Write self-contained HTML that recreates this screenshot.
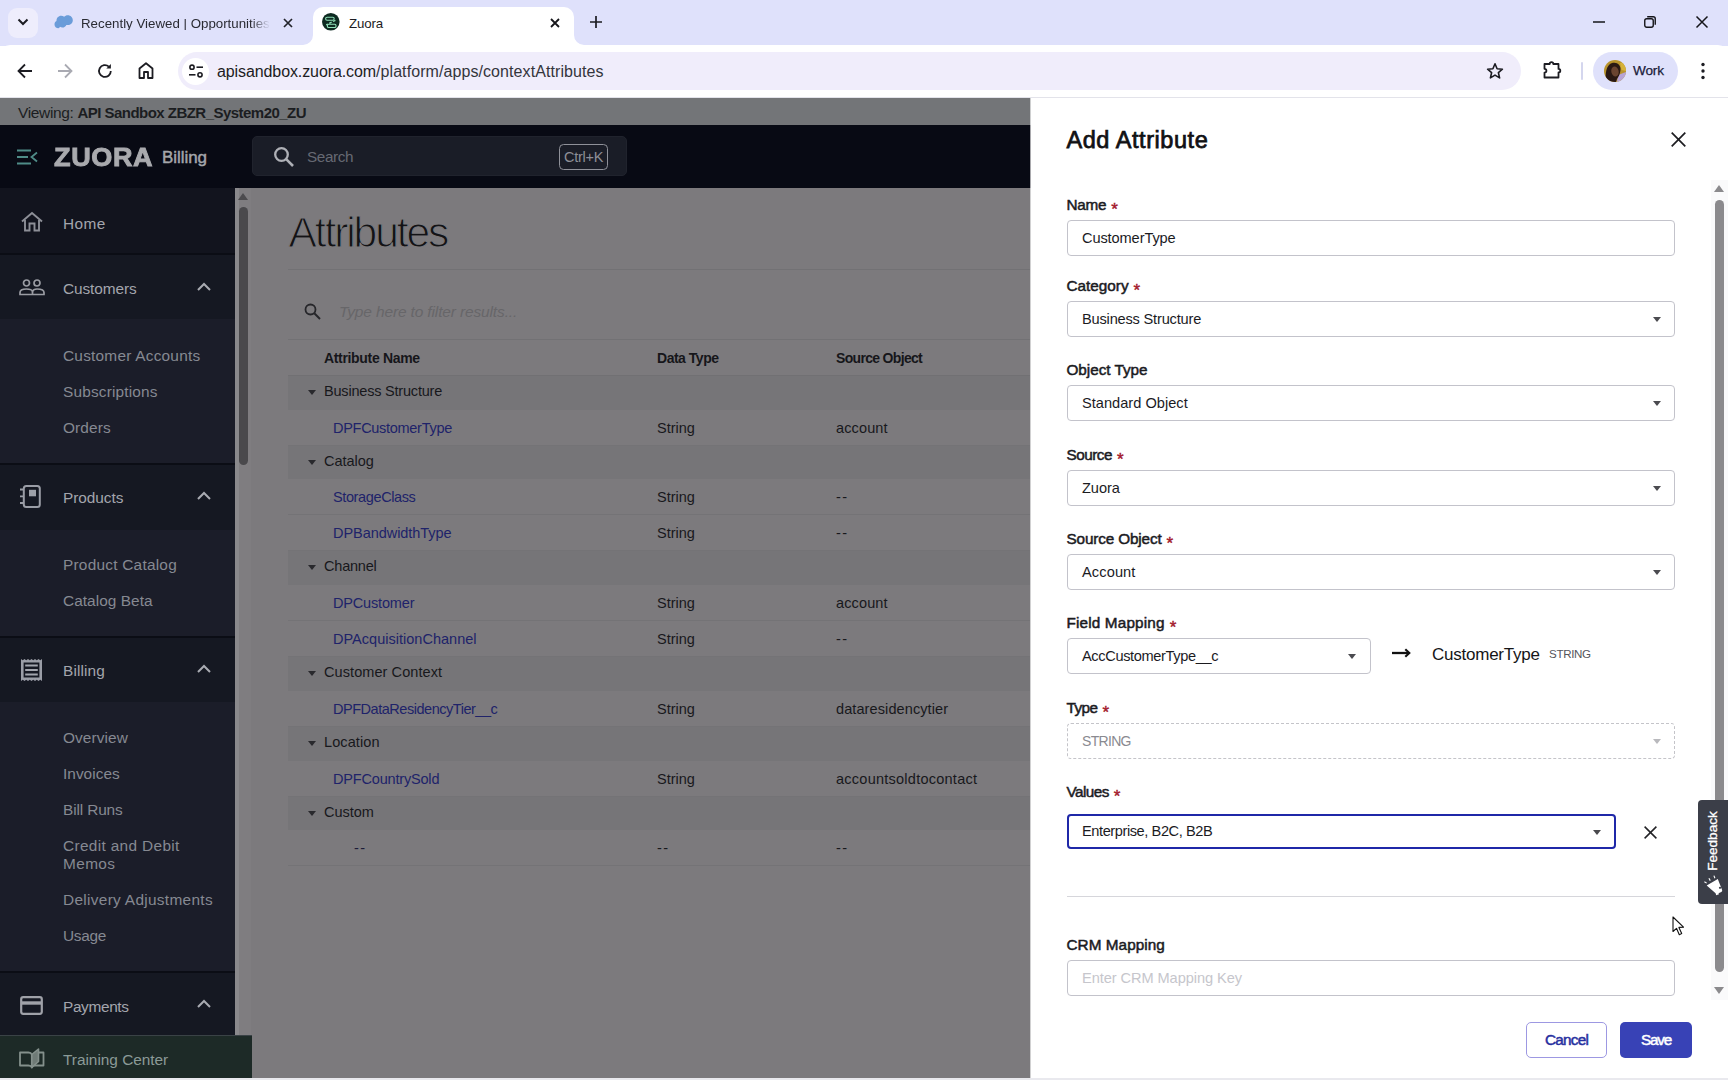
<!DOCTYPE html>
<html lang="en"><head>
<meta charset="utf-8">
<title>Zuora</title>
<style>
*{box-sizing:border-box;margin:0;padding:0}
html,body{width:1728px;height:1080px;overflow:hidden;background:#fff;font-family:"Liberation Sans",sans-serif;color:#111}
.abs{position:absolute}
#root{position:relative;width:1728px;height:1080px;overflow:hidden}
/* ---------- browser chrome ---------- */
#tabstrip{left:0;top:0;width:1728px;height:46px;background:#dfe1fb}
#toolbar{left:0;top:45px;width:1728px;height:53px;background:#fff;border-bottom:1px solid #e3e3ea;border-radius:10px 10px 0 0}
.t{position:absolute;white-space:nowrap;line-height:1}
svg{position:absolute;overflow:visible}
/* ---------- app ---------- */
#viewing{left:0;top:98px;width:1030px;height:27px;background:#737578}
#hdr{left:0;top:125px;width:1030px;height:63px;background:#080a14}
#side{left:0;top:188px;width:235px;height:892px;background:#1b1d29}
#main{left:235px;top:188px;width:795px;height:892px;background:#7c7a7d}
.sh{position:absolute;left:0;width:235px;background:#0e101a}
.si{position:absolute;left:63px;color:#868992;font-size:15.4px;line-height:18px;white-space:nowrap}
.sl{position:absolute;left:63px;color:#a3a5ad;font-size:15.4px;line-height:18px;white-space:nowrap}
.th{top:349px;font-size:14px;font-weight:700;color:#16161a;line-height:18px;letter-spacing:-0.2px}
.td{font-size:14.5px;color:#18181c;line-height:20px}
.rl{left:288px;width:742px;height:1px;background:#747376}
.lnk{color:#20236a}
.grp{left:288px;width:742px;background:#767578}
/* ---------- drawer ---------- */
#drawer{left:1030px;top:98px;width:698px;height:982px;background:#fff}
.lbl{position:absolute;left:1066.5px;font-size:15.3px;font-weight:400;-webkit-text-stroke:0.5px #1b1b1f;color:#1b1b1f;line-height:18px;white-space:nowrap}
.lbl i{font-style:normal;color:#a3182c;font-weight:400;-webkit-text-stroke:0.4px #a3182c;margin-left:5px;font-size:17px;position:relative;top:4.5px;letter-spacing:0}
.inp{position:absolute;left:1066.5px;width:608px;height:36px;border:1px solid #c3c3cb;border-radius:4px;background:#fff;font-size:14.6px;color:#1b1b1f;line-height:35px;padding-left:14.5px;white-space:nowrap}
.car{position:absolute;width:0;height:0;border-left:4.5px solid transparent;border-right:4.5px solid transparent;border-top:5px solid #4b4b50}
</style>
</head>
<body>
<div id="root">
<div id="tabstrip" class="abs"></div>
<div class="abs" style="left:8px;top:8px;width:30px;height:30px;border-radius:9px;background:#eeedfc"></div>
<svg style="left:16px;top:17px" width="14" height="10" viewBox="0 0 14 10"><path d="M2.5 2.5 L7 7 L11.5 2.5" fill="none" stroke="#1c1c22" stroke-width="2"></path></svg>
<!-- inactive tab -->
<svg style="left:54px;top:14px" width="20" height="16" viewBox="0 0 20 16"><path d="M4.5 14.2c-2.3 0-4-1.7-4-3.8 0-1.500.8-2.700 2-3.300C2.300 4.200 4.400 1.800 7.200 1.800c1.100 0 2.100.4 2.900 1C11 1.900 12.300 1.300 13.800 1.300c2.800 0 5 2.200 5 4.900 0 2.700-2.200 4.900-5 4.900-.5 0-1-.1-1.400-.2-.7 1.500-2.200 2.600-4 2.600-.9 0-1.700-.3-2.400-.700-.4.900-.9 1.400-1.500 1.400z" fill="#6a9cd9"></path></svg>
<div class="t" style="left:81px;top:17px;font-size:13.3px;color:#2a2b33;width:189px;overflow:hidden;-webkit-mask-image:linear-gradient(90deg,#000 170px,transparent 189px);mask-image:linear-gradient(90deg,#000 170px,transparent 189px)">Recently Viewed | Opportunities</div>
<svg style="left:283px;top:18px" width="10" height="10" viewBox="0 0 10 10"><path d="M1 1L9 9M9 1L1 9" stroke="#22232a" stroke-width="1.700" fill="none"></path></svg>
<!-- active tab -->
<div class="abs" style="left:313px;top:7px;width:261px;height:40px;background:#fff;border-radius:10px 10px 0 0"></div>
<svg style="left:303px;top:35px" width="10" height="10" viewBox="0 0 10 10"><path d="M10 0V10H0A10 10 0 0 0 10 0Z" fill="#fff"></path></svg>
<svg style="left:574px;top:35px" width="10" height="10" viewBox="0 0 10 10"><path d="M0 0V10H10A10 10 0 0 1 0 0Z" fill="#fff"></path></svg>
<svg style="left:322px;top:13px" width="17.600" height="17.600" viewBox="0 0 17.600 17.600"><circle cx="8.800" cy="8.800" r="8.800" fill="#0d2a21"></circle><rect x="3.600" y="4.200" width="8.600" height="3" rx="1.500" fill="none" stroke="#8fe0b8" stroke-width="1.100"></rect><rect x="5.400" y="11.300" width="8.600" height="3.200" rx="1.300" fill="none" stroke="#8fe0b8" stroke-width="1.100"></rect><path d="M13.400 7.400L4.200 11.800" stroke="#8fe0b8" stroke-width="1.300" stroke-dasharray="2.600 1.600"></path></svg>
<div class="t" style="left: 349px; top: 17px; font-size: 13.3px; color: rgb(28, 28, 34); letter-spacing: -0.16px;">Zuora</div>
<svg style="left:550px;top:18px" width="10" height="10" viewBox="0 0 10 10"><path d="M1 1L9 9M9 1L1 9" stroke="#15151a" stroke-width="1.800" fill="none"></path></svg>
<svg style="left:590px;top:16px" width="12" height="12" viewBox="0 0 12 12"><path d="M6 0V12M0 6H12" stroke="#1c1c22" stroke-width="1.700"></path></svg>
<!-- window controls -->
<svg style="left:1593px;top:21px" width="12" height="2" viewBox="0 0 12 2"><path d="M0 1H12" stroke="#15151a" stroke-width="1.500"></path></svg>
<svg style="left:1644px;top:16px" width="12" height="12" viewBox="0 0 12 12"><rect x=".75" y="2.750" width="8.500" height="8.500" rx="2" fill="none" stroke="#15151a" stroke-width="1.400"></rect><path d="M3.200 .75H9.200Q11.250 .75 11.250 2.800V8.800" fill="none" stroke="#15151a" stroke-width="1.400"></path></svg>
<svg style="left:1696px;top:16px" width="12" height="12" viewBox="0 0 12 12"><path d="M.5 .5L11.500 11.500M11.500 .5L.5 11.500" stroke="#15151a" stroke-width="1.500"></path></svg>
<!-- toolbar -->
<div id="toolbar" class="abs"></div>
<svg style="left:17px;top:63px" width="16" height="16" viewBox="0 0 16 16"><path d="M15 8H2M8 1.500L1.500 8L8 14.500" fill="none" stroke="#1c1c22" stroke-width="1.800"></path></svg>
<svg style="left:57px;top:63px" width="16" height="16" viewBox="0 0 16 16"><path d="M1 8H14M8 1.500L14.500 8L8 14.500" fill="none" stroke="#a9aab2" stroke-width="1.800"></path></svg>
<svg style="left:97px;top:63px" width="16" height="16" viewBox="0 0 16 16"><path d="M13.800 8A5.900 5.900 0 1 1 11.900 3.700" fill="none" stroke="#1c1c22" stroke-width="1.800"></path><path d="M13.900 1V5.600H9.300Z" fill="#1c1c22"></path></svg>
<svg style="left:138px;top:62px" width="16" height="17" viewBox="0 0 16 17"><path d="M1.500 16V6.500L8 1.300L14.500 6.500V16H10V10H6V16Z" fill="none" stroke="#1c1c22" stroke-width="1.800" stroke-linejoin="round"></path></svg>
<div class="abs" style="left:178px;top:52px;width:1343px;height:38px;border-radius:19px;background:#f0edfb"></div>
<div class="abs" style="left:181.500px;top:57.500px;width:27px;height:27px;border-radius:14px;background:#fff"></div>
<svg style="left:188px;top:64px" width="16" height="14" viewBox="0 0 16 14"><circle cx="4" cy="3.200" r="2.100" fill="none" stroke="#1c1c22" stroke-width="1.600"></circle><path d="M8.500 3.200H15" stroke="#1c1c22" stroke-width="1.600"></path><circle cx="12" cy="10.800" r="2.100" fill="none" stroke="#1c1c22" stroke-width="1.600"></circle><path d="M1 10.800H7.500" stroke="#1c1c22" stroke-width="1.600"></path></svg>
<div class="t" style="left:217px;top:62.5px;font-size:16px;color:#1c1c22;line-height:18px"><span style="letter-spacing: -0.1px;">apisandbox.zuora.com</span><span style="color: rgb(52, 53, 60); letter-spacing: 0.08px;">/platform/apps/contextAttributes</span></div>
<svg style="left:1486px;top:62px" width="18" height="18" viewBox="0 0 18 18"><path d="M9 1.800L11.100 6.700L16.400 7.200L12.400 10.700L13.600 15.900L9 13.100L4.400 15.900L5.600 10.700L1.600 7.200L6.900 6.700Z" fill="none" stroke="#1c1c22" stroke-width="1.600" stroke-linejoin="round"></path></svg>
<svg style="left:1543px;top:60px" width="20" height="20" viewBox="0 0 20 20"><path d="M1.500 4H6.700A1.800 1.800 0 0 1 10.300 4H15.500V8.900A1.800 1.800 0 0 1 15.500 12.500V17.500H1.500V12.600A1.900 1.900 0 0 0 1.500 8.800Z" fill="none" stroke="#1c1c22" stroke-width="1.800" stroke-linejoin="round"></path></svg>
<div class="abs" style="left:1581px;top:62px;width:2px;height:18px;background:#d4d6ee;border-radius:1px"></div>
<div class="abs" style="left:1593px;top:52px;width:85px;height:38px;border-radius:19px;background:#dfe1fb"></div>
<svg style="left:1604px;top:60px" width="22" height="22" viewBox="0 0 22 22"><clipPath id="av"><circle cx="11" cy="11" r="11"></circle></clipPath><g clip-path="url(#av)"><rect width="22" height="22" fill="#b8932c"></rect><path d="M13 22L14 15L22 12V22Z" fill="#b7a4d6"></path><path d="M2 22C1 14 2 5 8 3C13 1.500 17 5 16.500 10C16.200 14 14.500 17 13 19L12 22Z" fill="#2a1913"></path><ellipse cx="11" cy="11.500" rx="3.700" ry="5" fill="#6a4430" transform="rotate(-12 11 11.500)"></ellipse><path d="M16 3L22 2V11L17.500 10Z" fill="#d6b23a"></path></g></svg>
<div class="t" style="left: 1633px; top: 63px; font-size: 13.6px; color: rgb(26, 27, 58); -webkit-text-stroke: 0.25px rgb(26, 27, 58); line-height: 16px; letter-spacing: -0.16px;">Work</div>
<svg style="left:1701px;top:62px" width="4" height="18" viewBox="0 0 4 18"><circle cx="2" cy="2.500" r="1.700" fill="#1c1c22"></circle><circle cx="2" cy="9" r="1.700" fill="#1c1c22"></circle><circle cx="2" cy="15.500" r="1.700" fill="#1c1c22"></circle></svg>
<div id="viewing" class="abs"></div>
<div class="t" style="left:18px;top:104px;font-size:15.5px;color:#1b1d21;line-height:18px;"><span style="letter-spacing: -0.35px;">Viewing: </span><b style="font-size: 15px; letter-spacing: -0.53px;">API Sandbox ZBZR_System20_ZU</b></div>
<div id="hdr" class="abs"></div>
<svg style="left:17px;top:149px" width="21" height="16" viewBox="0 0 21 16"><path d="M0 1.500H14M0 8H11M0 14.500H14" stroke="#4f8c88" stroke-width="1.800"></path><path d="M20 3.500L14.500 8L20 12.500" fill="none" stroke="#4f8c88" stroke-width="1.800"></path></svg>
<div class="t" id="logo" style="left:54px;top:144px;font-size:25.5px;font-weight:700;color:#a9aaae;line-height:26px;letter-spacing:0.6px;-webkit-text-stroke:0.9px #a9aaae;transform:scaleX(1.06);transform-origin:0 0">ZUORA</div>
<div class="t" style="left: 162px; top: 148px; font-size: 17px; font-weight: 400; color: rgb(164, 166, 171); line-height: 20px; -webkit-text-stroke: 0.45px rgb(164, 166, 171); letter-spacing: -0.06px;">Billing</div>
<div class="abs" style="left:252px;top:136px;width:375px;height:40px;border-radius:5px;background:#1a1d27;border:1px solid #20232d"></div>
<svg style="left:273px;top:146px" width="22" height="22" viewBox="0 0 22 22"><circle cx="8.500" cy="8.500" r="6.300" fill="none" stroke="#aeb0b6" stroke-width="2.300"></circle><path d="M13.200 13.200L20 20" stroke="#aeb0b6" stroke-width="2.600"></path></svg>
<div class="t" style="left: 307px; top: 148px; font-size: 15.3px; color: rgb(102, 105, 115); line-height: 18px; letter-spacing: -0.39px;">Search</div>
<div class="abs" style="left:559px;top:143.5px;width:49px;height:26px;border:1.3px solid #8f9199;border-radius:4.5px"></div>
<div class="t" style="left: 564px; top: 149px; font-size: 14.5px; color: rgb(141, 143, 151); line-height: 16px; letter-spacing: -0.24px;">Ctrl+K</div>
<!-- sidebar -->
<div id="side" class="abs"></div>
<div class="sh" style="top:188px;height:65px;background:#12141e"></div>
<div class="sh" style="top:253px;height:2px;background:#0b0d15"></div>
<div class="sh" style="top:255px;height:64px;background:#151822"></div>
<div class="sh" style="top:463px;height:2px;background:#0b0d15"></div>
<div class="sh" style="top:465px;height:65px;background:#151822"></div>
<div class="sh" style="top:636px;height:2px;background:#0b0d15"></div>
<div class="sh" style="top:638px;height:64px;background:#151822"></div>
<div class="sh" style="top:971px;height:2px;background:#0b0d15"></div>
<div class="sh" style="top:973px;height:107px;background:#151822"></div>
<!-- icons -->
<svg style="left:21px;top:212px" width="22" height="20" viewBox="0 0 22 20"><path d="M1 9.500L11 1L21 9.500" fill="none" stroke="#8d8f97" stroke-width="1.900"></path><path d="M4 8V18.500H8.500V11.500H13.500V18.500H18V8" fill="none" stroke="#8d8f97" stroke-width="1.900"></path></svg>
<svg style="left:19px;top:279px" width="26" height="17" viewBox="0 0 26 17"><circle cx="7.500" cy="4" r="3" fill="none" stroke="#9a9ca3" stroke-width="1.700"></circle><circle cx="18" cy="4" r="3" fill="none" stroke="#9a9ca3" stroke-width="1.700"></circle><path d="M1 15.500V13.500C1 11 4.500 10 7.500 10S13 11 13.500 12.500C14 11 16 10 18 10C21 10 25 11 25 13.500V15.500Z" fill="none" stroke="#9a9ca3" stroke-width="1.700"></path><path d="M13.500 12.500V15.500" stroke="#9a9ca3" stroke-width="1.700"></path></svg>
<svg style="left:20px;top:484px" width="22" height="25" viewBox="0 0 22 25"><rect x="3.800" y="2" width="16" height="21" rx="2.500" fill="none" stroke="#9a9da6" stroke-width="2"></rect><rect x="9" y="5.800" width="7" height="6.500" fill="#9da0a8"></rect><path d="M0 5.500H3.500M0 12.300H3.500M0 19H3.500" stroke="#9a9da6" stroke-width="1.800"></path></svg>
<svg style="left:21px;top:659px" width="21" height="22" viewBox="0 0 21 22"><path fill-rule="evenodd" d="M0 0L1.750 1.200L3.500 0L5.250 1.200L7 0L8.750 1.200L10.500 0L12.250 1.200L14 0L15.750 1.200L17.500 0L19.250 1.200L21 0V22L19.250 20.800L17.500 22L15.750 20.800L14 22L12.250 20.800L10.500 22L8.750 20.800L7 22L5.250 20.800L3.500 22L1.750 20.800L0 22ZM2.600 3.600V18.400H18.400V3.600Z" fill="#9a9da6"></path><path d="M4.200 6.400H16.800M4.200 11H16.800M4.200 15.600H16.800" stroke="#a2a5ad" stroke-width="2"></path></svg>
<svg style="left:20px;top:996px" width="23" height="19" viewBox="0 0 23 19"><rect x="1.200" y="1.200" width="20.600" height="16.600" rx="2" fill="none" stroke="#9fa1a8" stroke-width="2.200"></rect><path d="M1 7H22" stroke="#9fa1a8" stroke-width="3.400"></path></svg>
<!-- chevrons -->
<svg style="left:197px;top:282px" width="14" height="9" viewBox="0 0 14 9"><path d="M1 8L7 2L13 8" fill="none" stroke="#a9abb2" stroke-width="2"></path></svg>
<svg style="left:197px;top:491px" width="14" height="9" viewBox="0 0 14 9"><path d="M1 8L7 2L13 8" fill="none" stroke="#a9abb2" stroke-width="2"></path></svg>
<svg style="left:197px;top:664px" width="14" height="9" viewBox="0 0 14 9"><path d="M1 8L7 2L13 8" fill="none" stroke="#a9abb2" stroke-width="2"></path></svg>
<svg style="left:197px;top:999px" width="14" height="9" viewBox="0 0 14 9"><path d="M1 8L7 2L13 8" fill="none" stroke="#a9abb2" stroke-width="2"></path></svg>
<!-- labels -->
<div class="sl" style="top: 215px; letter-spacing: 0.38px;">Home</div>
<div class="sl" style="top: 280px; letter-spacing: -0.09px;">Customers</div>
<div class="si" style="top: 347px; letter-spacing: 0.23px;">Customer Accounts</div>
<div class="si" style="top: 383px; letter-spacing: 0.18px;">Subscriptions</div>
<div class="si" style="top: 419px; letter-spacing: 0.13px;">Orders</div>
<div class="sl" style="top: 489px; letter-spacing: -0.04px;">Products</div>
<div class="si" style="top: 556px; letter-spacing: 0.24px;">Product Catalog</div>
<div class="si" style="top: 592px; letter-spacing: 0.05px;">Catalog Beta</div>
<div class="sl" style="top: 662px; letter-spacing: 0.12px;">Billing</div>
<div class="si" style="top: 729px; letter-spacing: 0.09px;">Overview</div>
<div class="si" style="top: 765px; letter-spacing: 0.03px;">Invoices</div>
<div class="si" style="top: 801px; letter-spacing: -0.13px;">Bill Runs</div>
<div class="si" style="top:837px"><span style="letter-spacing: 0.34px;">Credit and Debit</span><br><span style="letter-spacing: 0.38px;">Memos</span></div>
<div class="si" style="top: 891px; letter-spacing: 0.31px;">Delivery Adjustments</div>
<div class="si" style="top: 927px; letter-spacing: -0.28px;">Usage</div>
<div class="sl" style="top: 998px; letter-spacing: -0.35px;">Payments</div>
<!-- main -->
<div id="main" class="abs"></div>
<div class="abs" style="left:235px;top:188px;width:4px;height:892px;background:#8a898c"></div><div class="abs" style="left:239px;top:188px;width:12px;height:892px;background:#7f7d80"></div>
<svg style="left:238px;top:192px" width="10" height="8" viewBox="0 0 10 8"><path d="M0 8L5 1L10 8Z" fill="#4c4b4e"></path></svg>
<div class="abs" style="left:239px;top:207px;width:9px;height:258px;border-radius:4.500px;background:#4a494c"></div>
<div class="t" style="left: 288.5px; top: 208px; font-size: 42.5px; color: rgb(19, 19, 22); line-height: 50px; font-weight: 400; -webkit-text-stroke: 1.1px rgb(124, 122, 125); letter-spacing: -2.09px;" id="ttl">Attributes</div>
<div class="abs" style="left:288px;top:269px;width:742px;height:1px;background:#727174"></div>
<svg style="left:304px;top:303px" width="17" height="17" viewBox="0 0 17 17"><circle cx="6.500" cy="6.500" r="5" fill="none" stroke="#26262a" stroke-width="1.800"></circle><path d="M10.300 10.300L16 16" stroke="#26262a" stroke-width="2"></path></svg>
<div class="t" style="left: 339px; top: 303px; font-size: 15.5px; font-style: italic; color: rgb(103, 102, 105); line-height: 18px; letter-spacing: -0.14px;">Type here to filter results...</div>
<div class="abs" style="left:288px;top:339px;width:742px;height:1px;background:#727174"></div>
<div class="t th" style="left: 324px; letter-spacing: -0.33px;">Attribute Name</div>
<div class="t th" style="left: 657px; letter-spacing: -0.48px;">Data Type</div>
<div class="t th" style="left: 836px; letter-spacing: -0.68px;">Source Object</div>
<div class="abs" style="left:288px;top:375px;width:742px;height:1px;background:#717073"></div>
<div class="abs grp" style="top:376px;height:34px"></div>
<div class="car" style="left:308px;top:390px;border-top-color:#29292d"></div>
<div class="t td" style="left: 324px; top: 381px; letter-spacing: -0.2px;">Business Structure</div>
<div class="t td lnk" style="left: 333px; top: 418px; letter-spacing: -0.29px;">DPFCustomerType</div>
<div class="t td" style="left: 657px; top: 418px; letter-spacing: 0px;">String</div>
<div class="t td" style="left: 836px; top: 418px; letter-spacing: 0.13px;">account</div>
<div class="abs rl" style="top:445px"></div>
<div class="abs grp" style="top:446px;height:33px"></div>
<div class="car" style="left:308px;top:460px;border-top-color:#29292d"></div>
<div class="t td" style="left: 324px; top: 451px; letter-spacing: -0.03px;">Catalog</div>
<div class="t td lnk" style="left: 333px; top: 487px; letter-spacing: -0.38px;">StorageClass</div>
<div class="t td" style="left: 657px; top: 487px; letter-spacing: 0px;">String</div>
<div class="t td" style="left: 836px; top: 487px; letter-spacing: 1.53px;">--</div>
<div class="abs rl" style="top:514px"></div>
<div class="t td lnk" style="left: 333px; top: 523px; letter-spacing: -0.05px;">DPBandwidthType</div>
<div class="t td" style="left: 657px; top: 523px; letter-spacing: 0px;">String</div>
<div class="t td" style="left: 836px; top: 523px; letter-spacing: 1.53px;">--</div>
<div class="abs rl" style="top:550px"></div>
<div class="abs grp" style="top:551px;height:34px"></div>
<div class="car" style="left:308px;top:565px;border-top-color:#29292d"></div>
<div class="t td" style="left: 324px; top: 556px; letter-spacing: -0.2px;">Channel</div>
<div class="t td lnk" style="left: 333px; top: 593px; letter-spacing: -0.17px;">DPCustomer</div>
<div class="t td" style="left: 657px; top: 593px; letter-spacing: 0px;">String</div>
<div class="t td" style="left: 836px; top: 593px; letter-spacing: 0.13px;">account</div>
<div class="abs rl" style="top:620px"></div>
<div class="t td lnk" style="left: 333px; top: 629px; letter-spacing: 0.02px;">DPAcquisitionChannel</div>
<div class="t td" style="left: 657px; top: 629px; letter-spacing: 0px;">String</div>
<div class="t td" style="left: 836px; top: 629px; letter-spacing: 1.53px;">--</div>
<div class="abs rl" style="top:656px"></div>
<div class="abs grp" style="top:657px;height:34px"></div>
<div class="car" style="left:308px;top:671px;border-top-color:#29292d"></div>
<div class="t td" style="left: 324px; top: 662px; letter-spacing: 0.08px;">Customer Context</div>
<div class="t td lnk" style="left: 333px; top: 699px; letter-spacing: -0.47px;">DPFDataResidencyTier__c</div>
<div class="t td" style="left: 657px; top: 699px; letter-spacing: 0px;">String</div>
<div class="t td" style="left: 836px; top: 699px; letter-spacing: 0.1px;">dataresidencytier</div>
<div class="abs rl" style="top:726px"></div>
<div class="abs grp" style="top:727px;height:34px"></div>
<div class="car" style="left:308px;top:741px;border-top-color:#29292d"></div>
<div class="t td" style="left: 324px; top: 732px; letter-spacing: 0.1px;">Location</div>
<div class="t td lnk" style="left: 333px; top: 769px; letter-spacing: -0.18px;">DPFCountrySold</div>
<div class="t td" style="left: 657px; top: 769px; letter-spacing: 0px;">String</div>
<div class="t td" style="left: 836px; top: 769px; letter-spacing: 0.25px;">accountsoldtocontact</div>
<div class="abs rl" style="top:796px"></div>
<div class="abs grp" style="top:797px;height:33px"></div>
<div class="car" style="left:308px;top:811px;border-top-color:#29292d"></div>
<div class="t td" style="left: 324px; top: 802px; letter-spacing: -0.04px;">Custom</div>
<div class="t td lnk" style="left: 354px; top: 838px; color: rgb(28, 28, 56); letter-spacing: 1.53px;">--</div>
<div class="t td" style="left: 657px; top: 838px; letter-spacing: 1.53px;">--</div>
<div class="t td" style="left: 836px; top: 838px; letter-spacing: 1.53px;">--</div>
<div class="abs rl" style="top:865px"></div>
<div class="abs" style="left:0;top:1035px;width:252px;height:43px;background:#1d2a27;border-top:1px solid #3a4246"></div>
<svg style="left:19px;top:1048px" width="26" height="21" viewBox="0 0 26 21"><path d="M1 4.500H9.500Q12 4.500 12.800 6.500V19.500Q12 17.500 9.500 17.500H1Z" fill="none" stroke="#84908c" stroke-width="1.800" stroke-linejoin="round"></path><path d="M12.800 6.500L19.500 1V13.500L12.800 19.500Z" fill="#6f7b77" stroke="#84908c" stroke-width="1.600" stroke-linejoin="round"></path><path d="M19.500 4.500H24.500V17.500H16Q13.500 17.500 12.800 19.500" fill="none" stroke="#84908c" stroke-width="1.800" stroke-linejoin="round"></path></svg>
<div class="sl" style="top: 1051px; color: rgb(139, 154, 151); letter-spacing: -0.02px;">Training Center</div>

<div id="drawer" class="abs"></div><div class="abs" style="left:1030px;top:98px;width:1px;height:27px;background:rgba(115,117,120,.35)"></div><div class="abs" style="left:1030px;top:125px;width:1px;height:63px;background:rgba(8,10,20,.35)"></div><div class="abs" style="left:1030px;top:188px;width:1px;height:890px;background:rgba(124,122,125,.35)"></div>
<div class="t" id="dttl" style="left: 1066.5px; top: 126px; font-size: 23.5px; font-weight: 400; -webkit-text-stroke: 0.75px rgb(17, 17, 20); color: rgb(17, 17, 20); line-height: 28px; letter-spacing: 0.56px;">Add Attribute</div>
<svg style="left:1671px;top:132px" width="15" height="15" viewBox="0 0 15 15"><path d="M.7 .7L14.300 14.300M14.300 .7L.7 14.300" stroke="#1d1d21" stroke-width="1.700"></path></svg>
<!-- fields -->
<div class="lbl" style="top:196px"><span style="letter-spacing: -0.24px;">Name</span><i>*</i></div>
<div class="inp" style="top: 220px; letter-spacing: -0.11px;">CustomerType</div>
<div class="lbl" style="top:277px"><span style="letter-spacing: 0px;">Category</span><i>*</i></div>
<div class="inp" style="top: 301px; letter-spacing: -0.19px;">Business Structure</div><div class="car" style="left:1652.5px;top:317px"></div>
<div class="lbl" style="top: 361px; letter-spacing: -0.03px;">Object Type</div>
<div class="inp" style="top: 385px; letter-spacing: 0.02px;">Standard Object</div><div class="car" style="left:1652.5px;top:401px"></div>
<div class="lbl" style="top:446px"><span style="letter-spacing: -0.51px;">Source</span><i>*</i></div>
<div class="inp" style="top: 470px; letter-spacing: -0.06px;">Zuora</div><div class="car" style="left:1652.5px;top:486px"></div>
<div class="lbl" style="top:530px"><span style="letter-spacing: -0.14px;">Source Object</span><i>*</i></div>
<div class="inp" style="top: 554px; letter-spacing: 0.11px;">Account</div><div class="car" style="left:1652.5px;top:570px"></div>
<div class="lbl" style="top:614px"><span style="letter-spacing: 0.16px;">Field Mapping</span><i>*</i></div>
<div class="inp" style="top: 638px; width: 304px; letter-spacing: -0.37px;">AccCustomerType__c</div><div class="car" style="left:1347.5px;top:654px"></div>
<svg style="left:1392px;top:647px" width="19" height="12" viewBox="0 0 19 12"><path d="M0 6H16.500" stroke="#111" stroke-width="2.300"></path><path d="M13.300 2.300L17.300 6L13.300 9.700" fill="none" stroke="#111" stroke-width="2.100"></path></svg>
<div class="t" style="left: 1432px; top: 645px; font-size: 17px; color: rgb(21, 21, 24); line-height: 20px; letter-spacing: -0.24px;">CustomerType</div>
<div class="t" style="left: 1549px; top: 647px; font-size: 11.6px; color: rgb(85, 85, 91); line-height: 14px; letter-spacing: -0.34px;">STRING</div>
<div class="lbl" style="top:699px"><span style="letter-spacing: -0.52px;">Type</span><i>*</i></div>
<div class="inp" style="top: 723px; border: 1px dashed rgb(196, 196, 201); color: rgb(138, 138, 144); font-size: 14px; letter-spacing: -0.68px;">STRING</div><div class="car" style="left:1652.5px;top:739px;border-top-color:#b9b9bd"></div>
<div class="lbl" style="top:783px"><span style="letter-spacing: -0.55px;">Values</span><i>*</i></div>
<div class="inp" style="top: 814px; width: 549px; height: 35px; border: 2px solid rgb(31, 40, 168); line-height: 31px; padding-left: 13.5px; letter-spacing: -0.42px;">Enterprise, B2C, B2B</div><div class="car" style="left:1593px;top:830px;border-top-color:#4a4a4e"></div>
<svg style="left:1644px;top:826px" width="13" height="13" viewBox="0 0 13 13"><path d="M.6 .6L12.400 12.400M12.400 .6L.6 12.400" stroke="#222226" stroke-width="1.500"></path></svg>
<div class="abs" style="left:1066.5px;top:896px;width:608px;height:1px;background:#d6d6db"></div>
<div class="lbl" style="top: 936px; letter-spacing: 0.05px;">CRM Mapping</div>
<div class="inp" style="top: 960px; color: rgb(198, 198, 204); letter-spacing: -0.07px;">Enter CRM Mapping Key</div>
<!-- scrollbar -->
<div class="abs" style="left:1711px;top:180px;width:17px;height:820px;background:#fafafb"></div>
<svg style="left:1714px;top:184px" width="10" height="8" viewBox="0 0 10 8"><path d="M0 8L5 1L10 8Z" fill="#8b8a8d"></path></svg>
<div class="abs" style="left:1715px;top:200px;width:9px;height:772px;border-radius:4.500px;background:#8b8a8d"></div>
<svg style="left:1714px;top:987px" width="10" height="8" viewBox="0 0 10 8"><path d="M0 0L5 7L10 0Z" fill="#8b8a8d"></path></svg>
<!-- feedback -->
<div class="abs" style="left:1698px;top:800px;width:30px;height:104px;background:#3b3e48;border-radius:4px 0 0 4px"></div>
<div class="t" style="left:1713px;top:841px;width:0;height:0"><div style="position:absolute;left:-30px;top:-9px;width:60px;height:18px;line-height:18px;text-align:center;transform:rotate(-90deg);color:#fff;font-size:13.6px;-webkit-text-stroke:0.3px #fff;white-space:nowrap">Feedback</div></div>
<svg style="left:1703px;top:873px" width="22" height="24" viewBox="0 0 22 24"><path d="M3.700 12.500L14.800 5.900L19.200 17.200Q19.400 18.400 18.300 18.900L15.500 20.300L16 21.300L13.200 22.300L12.600 20.300Z" fill="#fff"></path><circle cx="17" cy="14.800" r="1.100" fill="#3b3e48"></circle><path d="M1.400 8.700L3.700 10.100M5.900 5.300L7.300 7.600M10.900 2.600L11.900 5.200" stroke="#fff" stroke-width="1.100"></path></svg>
<!-- buttons -->
<div class="abs" style="left:1526px;top:1022px;width:81px;height:36px;border:1px solid #9d98e2;border-radius:5px;background:#fff"></div>
<div class="t" style="left: 1526px; top: 1031px; width: 81px; text-align: center; font-size: 15.3px; font-weight: 400; -webkit-text-stroke: 0.5px rgb(39, 48, 159); color: rgb(39, 48, 159); line-height: 18px; letter-spacing: -0.75px;">Cancel</div>
<div class="abs" style="left:1620px;top:1022px;width:72px;height:36px;border-radius:5px;background:#3842b6"></div>
<div class="t" style="left: 1620px; top: 1031px; width: 72px; text-align: center; font-size: 15.3px; font-weight: 400; -webkit-text-stroke: 0.5px rgb(255, 255, 255); color: rgb(255, 255, 255); line-height: 18px; letter-spacing: -1.26px;">Save</div>
<!-- cursor -->
<svg style="left:1672px;top:916px" width="13" height="20" viewBox="0 0 13 20"><path d="M1 1V15.500L4.500 12.300L7.300 18.700L9.700 17.600L6.900 11.400L11.500 11.200Z" fill="#fff" stroke="#111" stroke-width="1.100" stroke-linejoin="round"></path></svg>
<div class="abs" style="left:0;top:1078px;width:1728px;height:2px;background:#e9e9ee"></div>

</div>


</body></html>
